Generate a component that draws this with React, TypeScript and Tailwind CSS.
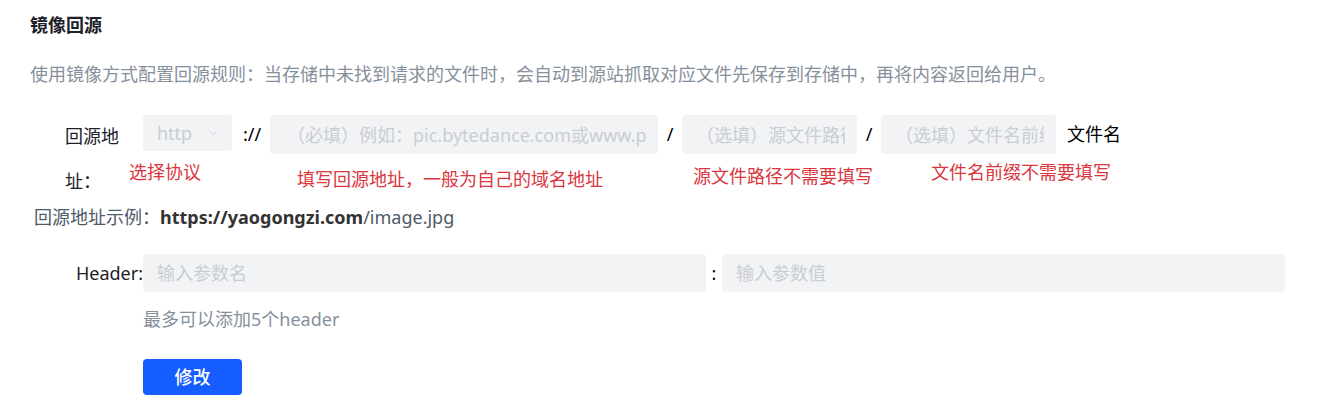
import { ChevronDown } from "lucide-react";

const font = "font-['Noto_Sans','Noto_Sans_CJK_SC',sans-serif]";

const Hint = ({ text, left, top }: { text: string; left: number; top: number }) => (
  <span
    className="absolute whitespace-nowrap text-[18px] leading-none text-[#d9363e]"
    style={{ left, top }}
  >
    {text}
  </span>
);

const App = () => {
  return (
    <div className={`${font} w-[1344px] h-[401px] bg-white pl-[30px] pt-[13px] overflow-hidden`}>
      <h1 className="text-[18px] leading-[24px] font-bold text-[#1d2129]">镜像回源</h1>
      <p className="mt-[25px] text-[18px] leading-[24px] text-[#86909c] whitespace-nowrap">
        使用镜像方式配置回源规则：当存储中未找到请求的文件时，会自动到源站抓取对应文件先保存到存储中，再将内容返回给用户。
      </p>

      {/* 回源地址 */}
      <div className="relative mt-[29px] flex items-start -ml-[30px] pl-[30px]">
        <div className="w-[113px] shrink-0 pl-[35px] pr-[10px] text-[18px] leading-[45px] -mt-[1px] text-[#1d2129]">
          回源地址：
        </div>
        <div className="flex items-start">
          <div className="flex h-[36px] w-[89px] items-center justify-between rounded-sm bg-[#f2f3f5] pl-[14px] pr-[12px] text-[18px] text-[#c9cdd4]">
            <span>http</span>
            <ChevronDown size={14} strokeWidth={1.5} />
          </div>
          <span className="w-[38px] pl-[11px] h-[39px] leading-[39px] text-[18px] text-black">://</span>
          <input
            className="h-[39px] w-[388px] rounded-sm bg-[#f2f3f5] pl-[17px] pr-[12px] text-[18px] outline-none placeholder:text-[#c9cdd4]"
            placeholder="（必填）例如：pic.bytedance.com或www.pic.bytedance.com"
          />
          <span className="w-[24px] text-center h-[39px] leading-[39px] text-[18px] text-black">/</span>
          <input
            className="h-[39px] w-[175px] rounded-sm bg-[#f2f3f5] pl-[14px] pr-[12px] text-[18px] outline-none placeholder:text-[#c9cdd4]"
            placeholder="（选填）源文件路径"
          />
          <span className="w-[24px] text-center h-[39px] leading-[39px] text-[18px] text-black">/</span>
          <input
            className="h-[39px] w-[175px] rounded-sm bg-[#f2f3f5] pl-[14px] pr-[12px] text-[18px] outline-none placeholder:text-[#c9cdd4]"
            placeholder="（选填）文件名前缀"
          />
          <span className="ml-[11px] h-[39px] leading-[39px] text-[18px] text-black">文件名</span>
        </div>
        <Hint text="选择协议" left={129} top={48} />
        <Hint text="填写回源地址，一般为自己的域名地址" left={297} top={55} />
        <Hint text="源文件路径不需要填写" left={693} top={52} />
        <Hint text="文件名前缀不需要填写" left={931} top={48} />
      </div>

      <div className="pl-[4px] text-[18px] leading-[26px] text-[#4e5969] whitespace-nowrap">
        回源地址示例：
        <span className="font-bold text-[#333]">https://yaogongzi.com</span>
        <span className="text-[#4e5969]">/image.jpg</span>
      </div>

      {/* Header */}
      <div className="mt-[24px] -ml-[30px] pl-[30px] flex items-center">
        <div className="w-[113px] shrink-0 text-right text-[18px] text-[#1d2129]">Header:</div>
        <input
          className="h-[38px] w-[563px] rounded-sm bg-[#f2f3f5] pl-[14px] pr-[12px] text-[18px] outline-none placeholder:text-[#c9cdd4]"
          placeholder="输入参数名"
        />
        <span className="w-[16px] text-center text-[18px] text-black">:</span>
        <input
          className="h-[38px] w-[563px] rounded-sm bg-[#f2f3f5] pl-[14px] pr-[12px] text-[18px] outline-none placeholder:text-[#c9cdd4]"
          placeholder="输入参数值"
        />
      </div>

      <div className="mt-[15px] ml-[113px] text-[18px] leading-[24px] text-[#86909c]">最多可以添加5个header</div>

      <button className="mt-[28px] ml-[113px] h-[36px] w-[99px] rounded-sm bg-[#165dff] text-[18px] font-medium text-white">
        修改
      </button>
    </div>
  );
};

export default App;
